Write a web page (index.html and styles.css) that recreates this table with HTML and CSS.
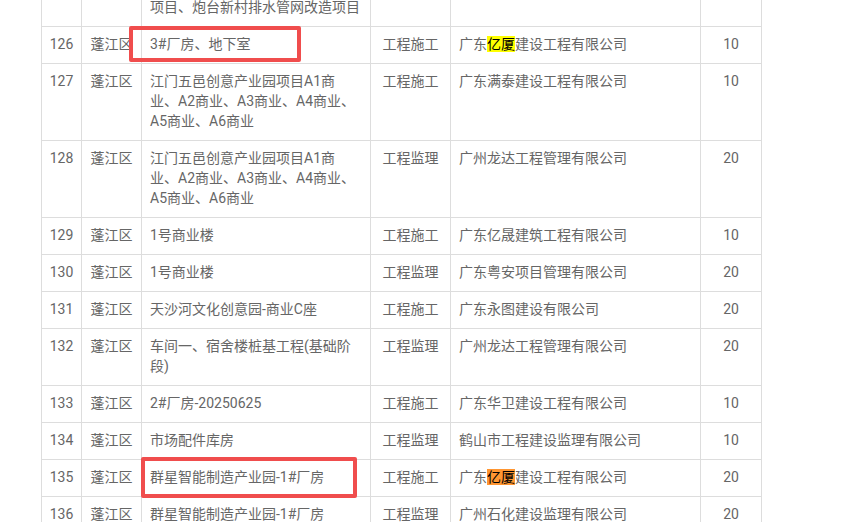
FILE: index.html
```html
<!DOCTYPE html>
<html lang="zh-CN">
<head>
<meta charset="utf-8">
<title>名单</title>
<link rel="stylesheet" href="styles.css">
</head>
<body>
<div class="wrap">
  <table class="list">
    <colgroup>
      <col class="c-no"><col class="c-area"><col class="c-name"><col class="c-type"><col class="c-corp"><col class="c-score">
    </colgroup>
    <tbody>
      <tr><td></td><td></td><td>项目、炮台新村排水管网改造项目</td><td></td><td></td><td></td></tr>
      <tr><td class="ctr">126</td><td class="ctr">蓬江区</td><td>3#厂房、地下室</td><td class="ctr">工程施工</td><td>广东<mark class="hit">亿厦</mark>建设工程有限公司</td><td class="ctr">10</td></tr>
      <tr><td class="ctr">127</td><td class="ctr">蓬江区</td><td>江门五邑创意产业园项目A1商业、A2商业、A3商业、A4商业、A5商业、A6商业</td><td class="ctr">工程施工</td><td>广东满泰建设工程有限公司</td><td class="ctr">10</td></tr>
      <tr><td class="ctr">128</td><td class="ctr">蓬江区</td><td>江门五邑创意产业园项目A1商业、A2商业、A3商业、A4商业、A5商业、A6商业</td><td class="ctr">工程监理</td><td>广州龙达工程管理有限公司</td><td class="ctr">20</td></tr>
      <tr><td class="ctr">129</td><td class="ctr">蓬江区</td><td>1号商业楼</td><td class="ctr">工程施工</td><td>广东亿晟建筑工程有限公司</td><td class="ctr">10</td></tr>
      <tr><td class="ctr">130</td><td class="ctr">蓬江区</td><td>1号商业楼</td><td class="ctr">工程监理</td><td>广东粤安项目管理有限公司</td><td class="ctr">20</td></tr>
      <tr><td class="ctr">131</td><td class="ctr">蓬江区</td><td>天沙河文化创意园-商业C座</td><td class="ctr">工程施工</td><td>广东永图建设有限公司</td><td class="ctr">20</td></tr>
      <tr><td class="ctr">132</td><td class="ctr">蓬江区</td><td>车间一、宿舍楼桩基工程(基础阶段)</td><td class="ctr">工程监理</td><td>广州龙达工程管理有限公司</td><td class="ctr">20</td></tr>
      <tr><td class="ctr">133</td><td class="ctr">蓬江区</td><td>2#厂房-20250625</td><td class="ctr">工程施工</td><td>广东华卫建设工程有限公司</td><td class="ctr">10</td></tr>
      <tr><td class="ctr">134</td><td class="ctr">蓬江区</td><td>市场配件库房</td><td class="ctr">工程监理</td><td>鹤山市工程建设监理有限公司</td><td class="ctr">10</td></tr>
      <tr><td class="ctr">135</td><td class="ctr">蓬江区</td><td>群星智能制造产业园-1#厂房</td><td class="ctr">工程施工</td><td>广东<mark class="hit active">亿厦</mark>建设工程有限公司</td><td class="ctr">20</td></tr>
      <tr><td class="ctr">136</td><td class="ctr">蓬江区</td><td>群星智能制造产业园-1#厂房</td><td class="ctr">工程监理</td><td>广州石化建设监理有限公司</td><td class="ctr">20</td></tr>
    </tbody>
  </table>
  <div class="box box-a"></div>
  <div class="box box-b"></div>
</div>
</body>
</html>
```

FILE: styles.css
```css
html, body {
  margin: 0;
  padding: 0;
  background: #fff;
  overflow: hidden;
}

.wrap {
  position: relative;
  height: 522px;
  overflow: hidden;
}

.list {
  margin: -11px 0 0 41px;
  width: 720px;
  table-layout: fixed;
  border-collapse: collapse;
  font-family: Roboto, "Noto Sans CJK SC", sans-serif;
  font-size: 14px;
  line-height: 20px;
  color: #666;
}

.c-no { width: 40px; }
.c-area { width: 60px; }
.c-name { width: 229px; }
.c-type { width: 80px; }
.c-corp { width: 250px; }
.c-score { width: 61px; }

.list td {
  border: 1px solid #dddddd;
  padding: 7px 8px 9px;
  vertical-align: top;
  text-align: left;
  word-break: break-all;
}

.list td.ctr {
  text-align: center;
  padding-left: 4px;
  padding-right: 4px;
}

.hit {
  background: #ffff00;
  color: #000;
}

.hit.active {
  background: #ff9632;
}

.box {
  position: absolute;
  border: 4px solid #f04d4d;
  border-radius: 2px;
  box-sizing: border-box;
}

.box-a {
  left: 129px;
  top: 26px;
  width: 172px;
  height: 36px;
}

.box-b {
  left: 141px;
  top: 457px;
  width: 216px;
  height: 41px;
}
```
